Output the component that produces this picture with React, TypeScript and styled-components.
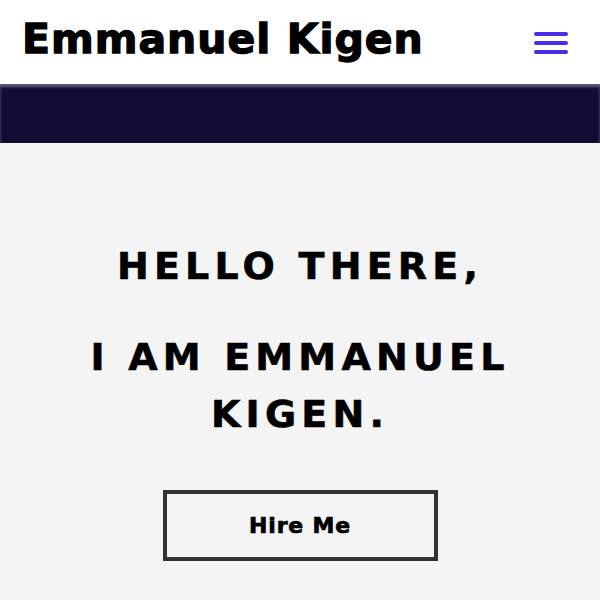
import React from "react";
import styled, { createGlobalStyle } from "styled-components";

const GlobalStyle = createGlobalStyle`
  * {
    box-sizing: border-box;
  }

  body {
    margin: 0;
    background: #f4f4f4;
    font-family: "DejaVu Sans", "Liberation Sans", sans-serif;
  }
`;

const Page = styled.div`
  display: flex;
  flex-direction: column;
  min-height: 600px;
  background: #f4f4f4;
`;

const NavBar = styled.header`
  display: flex;
  flex-direction: row;
  justify-content: space-between;
  align-items: center;
  height: 84px;
  padding: 0 32px 0 22px;
  background: #ffffff;

  .brand {
    margin: 0;
    font-size: 41px;
    font-weight: bold;
    letter-spacing: 1px;
    color: #000000;
    -webkit-text-stroke: 1.3px #000000;
    line-height: 1;
    padding-bottom: 6px;
  }
`;

const MenuButton = styled.button`
  display: flex;
  flex-direction: column;
  gap: 5px;
  width: 34px;
  padding: 0;
  margin-top: 2px;
  background: transparent;
  border: none;
  cursor: pointer;

  span {
    display: block;
    height: 4px;
    width: 100%;
    border-radius: 2px;
    background: #4b2de6;
  }
`;

const Band = styled.div`
  height: 59px;
  background: #120c35;
  box-shadow: inset 0 3px 3px rgba(160, 160, 180, 0.55);
`;

const Hero = styled.section`
  display: flex;
  flex-direction: column;
  align-items: center;
  padding-top: 95px;
  text-align: center;

  h1 {
    margin: 0;
    font-size: 38px;
    line-height: 57px;
    font-weight: bold;
    letter-spacing: 5.2px;
    color: #000000;
    -webkit-text-stroke: 0.6px #000000;
  }

  h1 + h1 {
    margin-top: 34px;
    padding: 0 80px;
  }
`;

const HireButton = styled.button`
  margin-top: 47px;
  width: 275px;
  height: 71px;
  border: 4px solid #333333;
  background: transparent;
  font-family: "DejaVu Sans", "Liberation Sans", sans-serif;
  font-size: 22px;
  font-weight: bold;
  letter-spacing: 0.8px;
  color: #000000;
  -webkit-text-stroke: 0.7px #000000;
  cursor: pointer;
`;

export default function App() {
  return <Page>
    <GlobalStyle />
    <NavBar>
      <p className="brand">Emmanuel Kigen</p>
      <MenuButton type={"button"} aria-label="menu">
        <span />
        <span />
        <span />
      </MenuButton>
    </NavBar>
    <Band />

    <Hero>
      <h1>HELLO THERE,</h1>
      <h1>I AM EMMANUEL KIGEN.</h1>
      <HireButton type={"button"}>Hire Me</HireButton>
    </Hero>
  </Page>
}
